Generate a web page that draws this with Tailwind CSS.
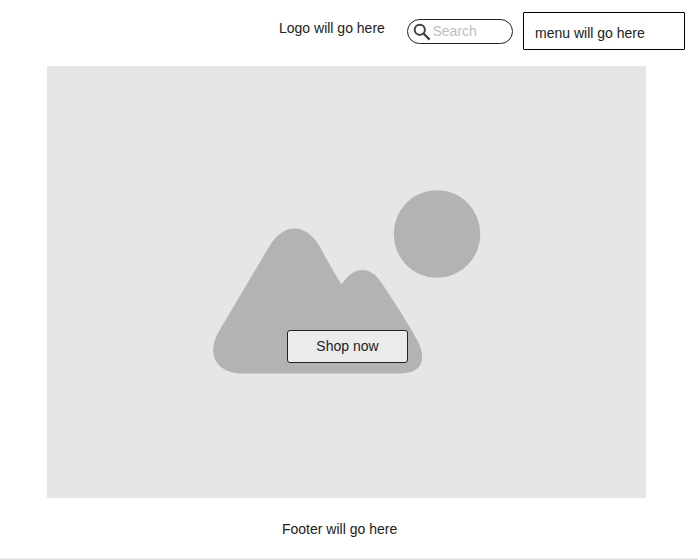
<!DOCTYPE html>
<html lang="en">
<head>
<meta charset="utf-8">
<title>Shop home</title>
<script src="https://cdn.jsdelivr.net/npm/@tailwindcss/browser@4"></script>
</head>
<body class="bg-white">
<div class="flex h-[560px] w-[698px] flex-col overflow-hidden font-['Liberation_Sans',Arial,sans-serif] text-sm leading-4 text-[#212121]">
  <header class="flex h-[66px] shrink-0 items-start pl-[279px] pt-3">
    <div class="w-32 pt-2 whitespace-nowrap">Logo will go here</div>
    <label class="mt-[7px] flex h-[25px] w-[106px] items-center rounded-full border border-[#212121] pl-[5px]">
      <svg class="mr-[1.5px] h-[18px] w-[18px] shrink-0" viewBox="0 0 18 18" fill="none" stroke="#424242" stroke-width="2"><circle cx="6.8" cy="6.8" r="5.1"/><path d="M10.5 10.5L16.600 16.600" stroke-width="2.3"/></svg>
      <span class="pb-0.5 text-[#bdbdbd]">Search</span>
    </label>
    <nav class="ml-2.5 h-[38px] w-[162px] rounded-[1px] border border-black pl-[11px] pt-3">menu will go here</nav>
  </header>
  <main class="relative ml-[47px] h-[432px] w-[599px] shrink-0 bg-[#e6e6e6]">
    <svg class="block h-[432px] w-[599px]" viewBox="47 66 599 432" fill="#b3b3b3">
      <ellipse cx="437" cy="234" rx="43.3" ry="43.8"/>
      <path d="M269.5 246C283 222.500 306 222.500 319.500 246C326 258 334 272.500 341.700 284.500C353 265.500 371 265 382 283.500C395 303 408 323 418.500 342.500C427 361 421 373.500 400 373.500H243C216 373.500 206 354 218.500 332Z"/>
    </svg>
    <button class="absolute left-[240px] top-[264px] flex h-[33px] w-[121px] items-center justify-center rounded-[3px] border border-[#212121] bg-[#ebebeb] pb-0.5">Shop now</button>
  </main>
  <footer class="flex h-[60px] shrink-0 pl-[282px] pt-[23px]">Footer will go here</footer>
  <div class="h-0.5 shrink-0 border-t border-[#ededed] bg-[#dedede]"></div>
</div>
</body>
</html>
